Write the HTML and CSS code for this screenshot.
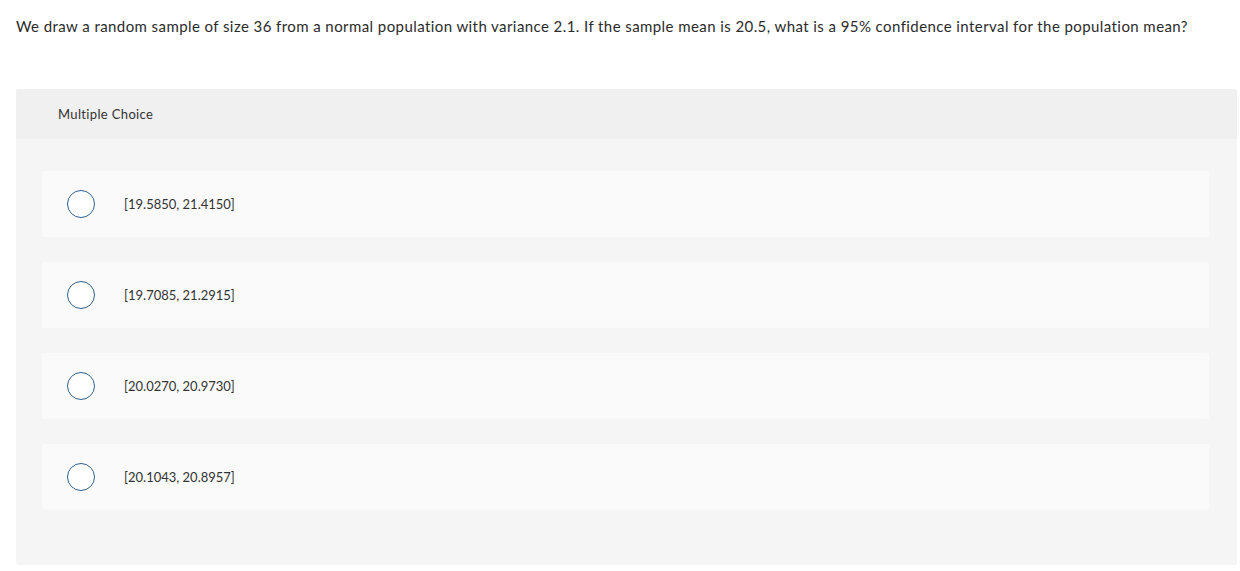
FILE: index.html
```html
<!DOCTYPE html>
<html>
<head>
<meta charset="utf-8">
<link rel="stylesheet" href="styles.css">
</head>
<body>
<p class="question">We draw a random sample of size 36 from a normal population with variance 2.1. If the sample mean is 20.5, what is a 95% confidence interval for the population mean?</p>
<section class="mc">
  <div class="mc-header">Multiple Choice</div>
  <div class="mc-body">
    <div class="option"><span class="radio"></span><span class="label">[19.5850, 21.4150]</span></div>
    <div class="option"><span class="radio"></span><span class="label">[19.7085, 21.2915]</span></div>
    <div class="option"><span class="radio"></span><span class="label">[20.0270, 20.9730]</span></div>
    <div class="option"><span class="radio"></span><span class="label">[20.1043, 20.8957]</span></div>
  </div>
</section>
</body>
</html>
```
FILE: styles.css
```css
html, body { margin: 0; padding: 0; background: #fff; }
body {
  font-family: Lato, "Open Sans", "Liberation Sans", sans-serif;
  color: #2b2b2b;
  padding: 0 3px 0 16px;
}
.question {
  margin: 0;
  padding-top: 16px;
  font-size: 15px;
  letter-spacing: 0.42px;
  line-height: 20px;
  height: 73px;
}
.mc {
  background: #f5f5f5;
  border-radius: 3px;
  overflow: hidden;
  height: 476px;
}
.mc-header {
  background: #f0f0f0;
  height: 50px;
  padding-left: 42px;
  font-size: 13px;
  letter-spacing: 0.35px;
  line-height: 50px;
  color: #333;
}
.mc-body {
  padding: 32px 28px 0 26px;
  display: flex;
  flex-direction: column;
  gap: 25px;
}
.option {
  background: #fafafa;
  border-radius: 3px;
  height: 66px;
  display: flex;
  align-items: center;
  padding-left: 25px;
}
.radio {
  width: 26px;
  height: 26px;
  border: 1.5px solid #2f5f8f;
  border-radius: 50%;
  background: #fff;
  box-sizing: content-box;
  flex: none;
}
.label {
  margin-left: 29px;
  font-size: 13px;
  color: #333;
}
```
